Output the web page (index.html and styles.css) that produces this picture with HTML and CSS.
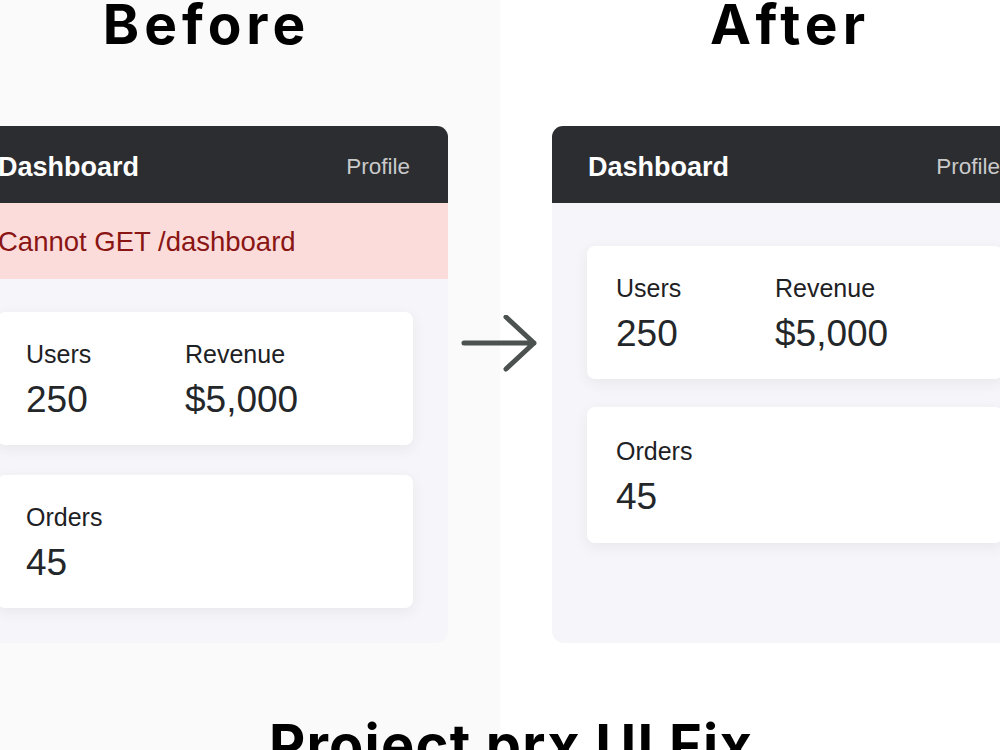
FILE: index.html
```html
<!DOCTYPE html>
<html>
<head>
    <meta charset="UTF-8">
    <link rel="stylesheet" href="styles.css">
</head>
<body>
    <div class="compare">
        <div class="side">
            <h2 class="side-title">Before</h2>
            <div class="panel">
                <div class="topbar">
                    <span class="brand">Dashboard</span>
                    <span class="nav-link">Profile</span>
                </div>
                <div class="error-bar">Cannot GET /dashboard</div>
                <div class="panel-body panel-body-before">
                    <div class="card">
                        <div class="stats">
                            <div class="stat">
                                <div class="stat-label">Users</div>
                                <div class="stat-value">250</div>
                            </div>
                            <div class="stat">
                                <div class="stat-label">Revenue</div>
                                <div class="stat-value">$5,000</div>
                            </div>
                        </div>
                    </div>
                    <div class="card">
                        <div class="stats">
                            <div class="stat">
                                <div class="stat-label">Orders</div>
                                <div class="stat-value">45</div>
                            </div>
                        </div>
                    </div>
                </div>
            </div>
        </div>

        <div class="arrow-col">
            <svg class="arrow" width="80" height="58" viewBox="0 0 80 58">
                <path d="M4 28 H74 M46 2 L74 28 L46 54" fill="none" stroke="#4b524f" stroke-width="5" stroke-linecap="round" stroke-linejoin="round"/>
            </svg>
        </div>

        <div class="side">
            <h2 class="side-title side-title-after">After</h2>
            <div class="panel">
                <div class="topbar">
                    <span class="brand">Dashboard</span>
                    <span class="nav-link">Profile</span>
                </div>
                <div class="panel-body panel-body-after">
                    <div class="card">
                        <div class="stats">
                            <div class="stat">
                                <div class="stat-label">Users</div>
                                <div class="stat-value">250</div>
                            </div>
                            <div class="stat">
                                <div class="stat-label">Revenue</div>
                                <div class="stat-value">$5,000</div>
                            </div>
                        </div>
                    </div>
                    <div class="card card-tall">
                        <div class="stats">
                            <div class="stat">
                                <div class="stat-label">Orders</div>
                                <div class="stat-value">45</div>
                            </div>
                        </div>
                    </div>
                </div>
            </div>
        </div>
    </div>

    <h1 class="page-title">Project prx UI Fix</h1>
</body>
</html>
```

FILE: styles.css
```css
html, body {
    margin: 0;
    padding: 0;
}
body {
    width: 1000px;
    height: 750px;
    overflow: hidden;
    font-family: "Liberation Sans", Arial, sans-serif;
    background: linear-gradient(to right, #fafafa 500px, #ffffff 500px);
    color: #222;
}
.compare {
    display: flex;
    margin-left: -38px;
    width: 1076px;
}
.side {
    width: 486px;
    flex: none;
}
.side-title {
    margin: -3px 0 75px;
    padding-left: 3px;
    font-family: Inter, "Liberation Sans", sans-serif;
    font-size: 55px;
    line-height: 54px;
    font-weight: 700;
    letter-spacing: 5px;
    text-align: center;
    color: #000;
}
.side-title-after {
    padding-left: 0;
    padding-right: 10px;
}
.panel {
    height: 517px;
    display: flex;
    flex-direction: column;
}
.topbar {
    height: 77px;
    box-sizing: border-box;
    background: #2b2d31;
    border-radius: 11px 11px 0 0;
    display: flex;
    justify-content: space-between;
    align-items: center;
    padding: 5px 38px 0 36px;
    flex: none;
}
.brand {
    color: #fff;
    font-size: 27px;
    font-weight: bold;
}
.nav-link {
    color: #c9c9c9;
    font-size: 22.5px;
}
.error-bar {
    height: 76px;
    box-sizing: border-box;
    background: #fcdcda;
    color: #8a1515;
    font-size: 27.5px;
    display: flex;
    align-items: center;
    padding: 2px 0 0 36px;
    flex: none;
}
.panel-body {
    flex: 1;
    background: #f6f6fa;
    border-radius: 0 0 12px 12px;
    display: flex;
    flex-direction: column;
}
.panel-body-before {
    padding: 33px 35px;
    gap: 30px;
}
.panel-body-after {
    padding: 43px 35px;
    gap: 28px;
}
.card {
    background: #fff;
    border-radius: 8px;
    box-shadow: 0 4px 14px rgba(40, 40, 60, 0.07);
    padding: 27px 29px 23px;
}
.card-tall {
    padding-top: 29px;
    padding-bottom: 24px;
}
.stats {
    display: grid;
    grid-template-columns: 159px auto;
}
.stat-label {
    font-size: 25px;
    line-height: 30px;
    color: #1e2124;
    margin-bottom: 9px;
}
.stat-value {
    font-size: 37px;
    line-height: 44px;
    color: #24272a;
}
.arrow-col {
    width: 104px;
    flex: none;
    display: flex;
    justify-content: center;
    padding-top: 315px;
    align-items: flex-start;
}
.page-title {
    margin: 75px 0 0;
    font-family: Inter, "Liberation Sans", sans-serif;
    font-size: 56px;
    line-height: 54px;
    font-weight: 700;
    letter-spacing: 1.2px;
    text-align: center;
    color: #000;
    padding-left: 22px;
}
```
